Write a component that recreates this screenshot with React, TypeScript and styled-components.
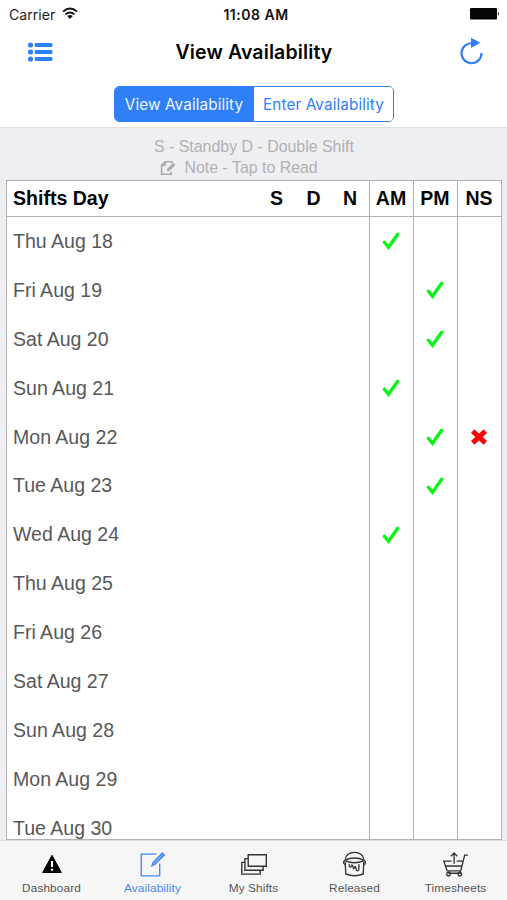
import React from 'react';
import styled, { createGlobalStyle } from 'styled-components';

const BLUE = '#2f80f8';
const LINE = '#b2b2b4';

const GlobalStyle = createGlobalStyle`
  * { box-sizing: border-box; }
  body { margin: 0; background: #eeeef3; }
  svg { display: block; }
`;

const Screen = styled.div`
  width: 507px;
  height: 900px;
  display: flex;
  flex-direction: column;
  overflow: hidden;
  background: #eeeef3;
  font-family: 'Liberation Sans', Arial, sans-serif;
`;

const TopArea = styled.header`
  height: 128px;
  flex: none;
  background: #fff;
  border-bottom: 1px solid #dfdfe2;
  font-family: Inter, sans-serif;
`;

const StatusBar = styled.div`
  height: 28px;
  padding: 0 7px 0 9px;
  display: grid;
  grid-template-columns: 1fr auto 1fr;
  align-items: center;
  font-size: 14px;
  color: #222;
`;

const Carrier = styled.div`
  display: flex;
  align-items: center;
  gap: 7px;
  letter-spacing: 0.05px;
`;

const Clock = styled.div`
  font-weight: 600;
  font-size: 14px;
  letter-spacing: 0.5px;
  padding-left: 3px;
  color: #111;
`;

const Battery = styled.div`
  justify-self: end;
`;

const NavBar = styled.nav`
  height: 50px;
  padding: 0 21px 2px 27px;
  display: grid;
  grid-template-columns: 1fr auto 1fr;
  align-items: center;
`;

const NavButton = styled.button<{ $end?: boolean }>`
  justify-self: ${(p) => (p.$end ? 'end' : 'start')};
  padding: 0;
  border: 0;
  background: none;
  color: ${BLUE};
`;

const Title = styled.h1`
  margin: 0;
  padding-right: 5px;
  font-size: 19.5px;
  font-weight: 600;
  letter-spacing: 0.12px;
  color: #050505;
`;

const Segments = styled.div`
  width: 280px;
  height: 36px;
  margin: 8px auto 0 114px;
  display: grid;
  grid-template-columns: 1fr 1fr;
  border: 1px solid ${BLUE};
  border-radius: 5px;
  overflow: hidden;
`;

const Segment = styled.button<{ $active?: boolean }>`
  padding: ${(p) => (p.$active ? '0 1px 0 0' : '0')};
  border: 0;
  font: 400 15.3px Inter, sans-serif;
  letter-spacing: 0.1px;
  white-space: nowrap;
  background: ${(p) => (p.$active ? BLUE : '#fff')};
  color: ${(p) => (p.$active ? '#eef5ff' : BLUE)};
`;

const Legend = styled.div`
  height: 52px;
  padding-top: 8px;
  flex: none;
  display: flex;
  flex-direction: column;
  font-size: 15.92px;
  line-height: 21px;
  color: #b1b1b4;
`;

const LegendLine = styled.div<{ $indent: number }>`
  height: 21px;
  padding-left: ${(p) => p.$indent}px;
  display: flex;
  align-items: center;
  gap: 8.5px;
`;

const Table = styled.main`
  width: 496px;
  height: 660px;
  flex: none;
  margin-left: 6px;
  display: flex;
  flex-direction: column;
  overflow: hidden;
  border: 1px solid ${LINE};
  background: #fff;
`;

const Row = styled.div`
  height: 48.9px;
  flex: none;
  display: grid;
  grid-template-columns: 1fr 37px 37px 36px 44px 44px 44px;
  color: #58585a;
  font-size: 19.55px;
`;

const HeadRow = styled(Row)`
  height: 36px;
  border-bottom: 1px solid ${LINE};
  color: #050505;
  font-weight: 700;
`;

const Cell = styled.div<{ $ruled?: boolean }>`
  display: flex;
  align-items: center;
  justify-content: center;
  padding-right: ${(p) => (p.$ruled ? 1 : 2)}px;
  border-left: ${(p) => (p.$ruled ? `1px solid ${LINE}` : '0')};
`;

const DayCell = styled.div`
  padding-left: 6px;
  display: flex;
  align-items: center;
  white-space: nowrap;
`;

const TabBar = styled.footer`
  flex: 1;
  padding: 0 1px;
  border-top: 1px solid #dcdcde;
  background: #f6f6f6;
  display: grid;
  grid-template-columns: repeat(5, 1fr);
`;

const Tab = styled.div<{ $active?: boolean }>`
  padding-top: 9px;
  display: flex;
  flex-direction: column;
  align-items: center;
  font-size: 11.8px;
  line-height: 14px;
  letter-spacing: 0.12px;
  color: ${(p) => (p.$active ? '#4388f5' : '#555')};
`;

const TabIcon = styled.div`
  height: 31px;
`;

const Check = () => (
  <svg width="18" height="20" viewBox="0 0 18 20" fill="none" stroke="#06f512" strokeWidth="3.3" strokeLinecap="round">
    <path d="M2.4 11.2 6.5 16.2 15.7 3.3" />
  </svg>
);

const Cross = () => (
  <svg width="18" height="18" viewBox="0 0 18 18" stroke="#f40808" strokeWidth="5" strokeLinecap="square">
    <path d="M4.5 4.8 13.5 13.2M13.5 4.8 4.5 13.2" />
  </svg>
);

const Wifi = () => (
  <svg width="16" height="14" viewBox="0 0 16 14" fill="none" stroke="#151515" strokeWidth="1.9">
    <path d="M1 4.6Q8-1.8 15 4.6M3.5 7.4Q8 3.4 12.5 7.4" />
    <path d="M5.2 9Q8 6.8 10.8 9L8 12Z" fill="#151515" stroke="none" />
  </svg>
);

const icons: Record<string, React.ReactNode> = {
  Dashboard: (
    <svg width="28" height="30" viewBox="0 0 28 30">
      <path d="M14 5.3 23.3 22.5H4.7Z" fill="#050505" stroke="#050505" strokeLinejoin="round" />
      <path d="M14 11v6" stroke="#fff" strokeWidth="2" />
      <circle cx="14" cy="19.8" r="1.2" fill="#fff" />
    </svg>
  ),
  Availability: (
    <svg width="28" height="30" viewBox="0 0 28 30" fill="none" stroke="#4388f5" strokeWidth="1.3">
      <path d="M17.5 4.2H2.2v21.6h18.5V13.5" />
      <path d="m12.9 15.7 1.1-3.2L23.4 3l2 1.9-9.3 9.4Z" fill="#7fadf8" />
      <path d="m21.8 4.7 2 1.9" />
    </svg>
  ),
  'My Shifts': (
    <svg width="28" height="30" viewBox="0 0 28 30" fill="none" stroke="#333" strokeWidth="1.4">
      <path d="M8.2 4.7h18.1v11.6H8.2ZM8.2 8.6H4.9v11.6h18.2v-3.9M4.9 12.4H1.8v11.7h18.4v-3.9" />
    </svg>
  ),
  Released: (
    <svg width="28" height="30" viewBox="0 0 28 30" fill="none" stroke="#333" strokeWidth="1.35">
      <path d="M4.3 9.5C5 4 9 2.4 13.5 2.4S22 4 22.8 9.5" />
      <path d="M4 10.2Q13.5 5.8 23 10.2M4 10.6q9.5 4.4 19 0" />
      <path d="M4.2 12 4.8 24q8.7 3.4 17.4 0l.6-12" />
      <path d="M4 10.4q-3 2 0 4.2M23 10.4q3 2 0 4.2" />
      <path d="M8.2 14.2c0 4 2.2 3.6 2.9.8 1.1.5.9 3.5 1.8 3.6s.7-1.8 1.3-2.2c1.1.4.4 4.4 2.2 4.4 2.1 0 1.3-3.4 1.6-6.6" />
    </svg>
  ),
  Timesheets: (
    <svg width="28" height="30" viewBox="0 0 28 30" fill="none" stroke="#333" strokeWidth="1.35">
      <path d="M26 5.1h-3.3l-4 15.7H5.1L1.8 11.1h7.7M14.7 11.1h6.2M3.4 16H20M7.1 20.8v2.4h10.8v-2.4M12.1 13.8V3.2M9 6.3l3.1-3.4 3.1 3.4" />
      <circle cx="6.5" cy="24.2" r="1.8" />
      <circle cx="17.8" cy="24.2" r="1.8" />
    </svg>
  ),
};

type Mark = 'check' | 'cross' | undefined;
type Day = { label: string; am?: Mark; pm?: Mark; ns?: Mark };

const days: Day[] = [
  { label: 'Thu Aug 18', am: 'check' },
  { label: 'Fri Aug 19', pm: 'check' },
  { label: 'Sat Aug 20', pm: 'check' },
  { label: 'Sun Aug 21', am: 'check' },
  { label: 'Mon Aug 22', pm: 'check', ns: 'cross' },
  { label: 'Tue Aug 23', pm: 'check' },
  { label: 'Wed Aug 24', am: 'check' },
  { label: 'Thu Aug 25' },
  { label: 'Fri Aug 26' },
  { label: 'Sat Aug 27' },
  { label: 'Sun Aug 28' },
  { label: 'Mon Aug 29' },
  { label: 'Tue Aug 30' },
];

const MarkCell = ({ mark }: { mark: Mark }) => (
  <Cell $ruled>
    {mark === 'check' && <Check />}
    {mark === 'cross' && <Cross />}
  </Cell>
);

export default function App() {
  return (
    <Screen>
      <GlobalStyle />
      <TopArea>
        <StatusBar>
          <Carrier>Carrier<Wifi /></Carrier>
          <Clock>11:08 AM</Clock>
          <Battery>
            <svg width="30" height="12" viewBox="0 0 30 12" fill="#050505">
              <rect width="27" height="11.5" rx="1.3" />
              <path d="M28 3.8q2 2 0 4Z" />
            </svg>
          </Battery>
        </StatusBar>
        <NavBar>
          <NavButton aria-label="Menu">
            <svg width="26" height="20" viewBox="0 0 26 20" fill="currentColor">
              {[3, 10, 17].map((y) => (
                <g key={y}>
                  <circle cx="3.5" cy={y} r="2.6" />
                  <rect x="7.8" y={y - 1.9} width="17.6" height="3.8" rx="0.8" />
                </g>
              ))}
            </svg>
          </NavButton>
          <Title>View Availability</Title>
          <NavButton $end aria-label="Refresh">
            <svg width="28" height="30" viewBox="0 0 28 30" fill="none" stroke="currentColor" strokeWidth="2.2">
              <path d="M14.5 6.3A10 10 0 1 0 23.5 16" />
              <path d="M13 .7 22.3 5.7 13 11Z" fill="currentColor" stroke="none" />
            </svg>
          </NavButton>
        </NavBar>
        <Segments>
          <Segment $active>View Availability</Segment>
          <Segment>Enter Availability</Segment>
        </Segments>
      </TopArea>
      <Legend>
        <LegendLine $indent={154}>S - Standby D - Double Shift</LegendLine>
        <LegendLine $indent={160}>
          <svg width="16" height="16" viewBox="0 0 16 16" fill="none" stroke="#aaaaad" strokeWidth="1.6">
            <path d="M11.8 3.3V1.8H5L1.6 5.3v9h9.6v-2.5M5 1.8v3.5H1.6" />
            <path d="m7.2 11 .6-2.5 5.5-5.4 1.9 1.8-5.5 5.5Z" fill="#aaaaad" strokeWidth="0.6" />
          </svg>
          Note - Tap to Read
        </LegendLine>
      </Legend>
      <Table>
        <HeadRow>
          <DayCell>Shifts Day</DayCell>
          <Cell>S</Cell>
          <Cell>D</Cell>
          <Cell>N</Cell>
          <Cell $ruled>AM</Cell>
          <Cell $ruled>PM</Cell>
          <Cell $ruled>NS</Cell>
        </HeadRow>
        {days.map((day) => (
          <Row key={day.label}>
            <DayCell>{day.label}</DayCell>
            <Cell />
            <Cell />
            <Cell />
            <MarkCell mark={day.am} />
            <MarkCell mark={day.pm} />
            <MarkCell mark={day.ns} />
          </Row>
        ))}
      </Table>
      <TabBar>
        {Object.entries(icons).map(([name, icon]) => (
          <Tab key={name} $active={name === 'Availability'}>
            <TabIcon>{icon}</TabIcon>
            {name}
          </Tab>
        ))}
      </TabBar>
    </Screen>
  );
}
